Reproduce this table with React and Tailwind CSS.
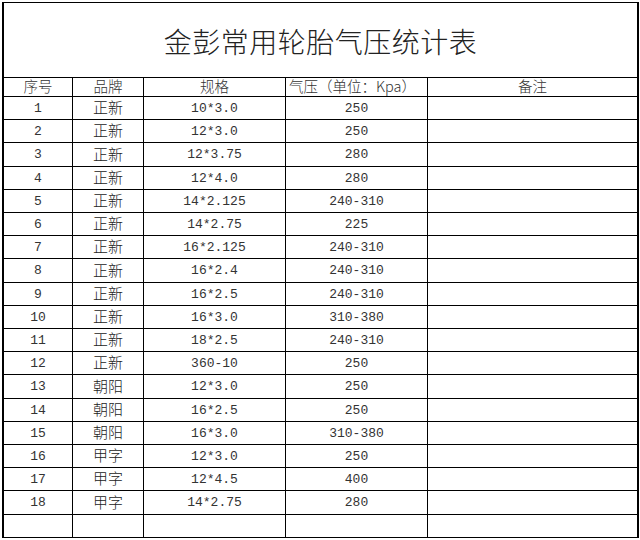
import React from 'react';

const rows = [
  ['1', '正新', '10*3.0', '250'],
  ['2', '正新', '12*3.0', '250'],
  ['3', '正新', '12*3.75', '280'],
  ['4', '正新', '12*4.0', '280'],
  ['5', '正新', '14*2.125', '240-310'],
  ['6', '正新', '14*2.75', '225'],
  ['7', '正新', '16*2.125', '240-310'],
  ['8', '正新', '16*2.4', '240-310'],
  ['9', '正新', '16*2.5', '240-310'],
  ['10', '正新', '16*3.0', '310-380'],
  ['11', '正新', '18*2.5', '240-310'],
  ['12', '正新', '360-10', '250'],
  ['13', '朝阳', '12*3.0', '250'],
  ['14', '朝阳', '16*2.5', '250'],
  ['15', '朝阳', '16*3.0', '310-380'],
  ['16', '甲字', '12*3.0', '250'],
  ['17', '甲字', '12*4.5', '400'],
  ['18', '甲字', '14*2.75', '280'],
  ['', '', '', ''],
];

const cjk = "font-['Noto_Sans_CJK_SC',sans-serif]";
const mono = "font-['Liberation_Mono','Noto_Sans_CJK_SC',monospace]";

const App = () => {
  return (
    <div className="w-[640px] h-[540px] bg-white pt-[2px] pl-[2px] overflow-hidden">
      <div className="w-[637px] border-l-2 border-r-2 border-t border-black text-[#222]">
        {/* Title */}
        <div className={`h-[75px] border-b border-black flex items-center justify-center pt-[2px] text-[28px] leading-none font-light tracking-[0.5px] ${cjk}`}>
          金彭常用轮胎气压统计表
        </div>

        {/* Header */}
        <div className={`h-[19px] grid grid-cols-[69px_71px_142px_142px_209px] border-b border-black text-[14.5px] leading-none font-light text-[#333] ${cjk}`}>
          <div className="border-r border-black flex items-center justify-center pb-[2px]">序号</div>
          <div className="border-r border-black flex items-center justify-center pb-[2px]">品牌</div>
          <div className="border-r border-black flex items-center justify-center pb-[2px]">规格</div>
          <div className="border-r border-black flex items-center pl-[3px] pb-[2px] whitespace-nowrap">气压（单位：Kpa）</div>
          <div className="flex items-center justify-center pb-[2px]">备注</div>
        </div>

        {/* Data rows */}
        {rows.map((r, i) => (
          <div
            key={i}
            className={`${i % 5 === 2 ? 'h-[24px]' : 'h-[23px]'} grid grid-cols-[69px_71px_142px_142px_209px] border-b border-black leading-none`}
          >
            <div className={`border-r border-black flex items-center justify-center text-[13px] text-[#333] ${mono}`}>{r[0]}</div>
            <div className={`border-r border-black flex items-center justify-center pb-[3px] text-[15px] font-light ${cjk}`}>{r[1]}</div>
            <div className={`border-r border-black flex items-center justify-center text-[13px] text-[#333] ${mono}`}>{r[2]}</div>
            <div className={`border-r border-black flex items-center justify-center text-[13px] text-[#333] ${mono}`}>{r[3]}</div>
            <div></div>
          </div>
        ))}
      </div>
    </div>
  );
};

export default App;
